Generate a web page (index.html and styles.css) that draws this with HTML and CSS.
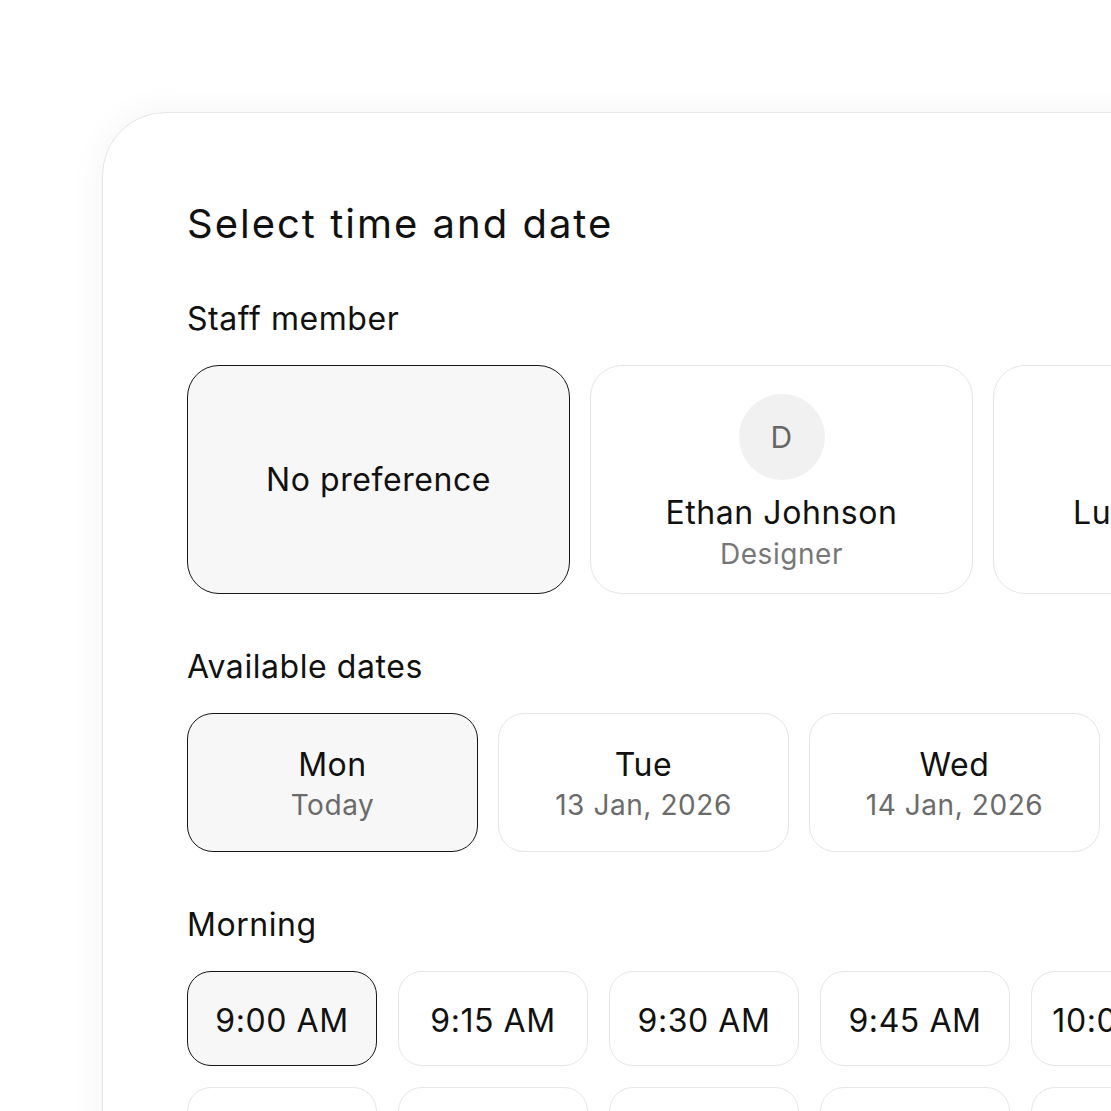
FILE: index.html
```html
<!DOCTYPE html>
<html lang="en">
<head>
  <meta charset="UTF-8" />
  <meta name="viewport" content="width=device-width, initial-scale=1.0" />
  <title>Select time and date</title>
  <link rel="stylesheet" href="styles.css">
</head>
<body>
  <div class="panel">
    <h1>Select time and date</h1>

    <h2>Staff member</h2>
    <div class="row staff">
      <button class="staff-card selected">
        <span class="name">No preference</span>
      </button>
      <button class="staff-card">
        <span class="avatar">D</span>
        <span class="name">Ethan Johnson</span>
        <span class="sub">Designer</span>
      </button>
      <button class="staff-card">
        <span class="avatar">L</span>
        <span class="name">Lucas Bennett</span>
        <span class="sub">Stylist</span>
      </button>
    </div>

    <h2>Available dates</h2>
    <div class="row dates">
      <button class="date-card selected">
        <span class="day">Mon</span>
        <span class="sub">Today</span>
      </button>
      <button class="date-card">
        <span class="day">Tue</span>
        <span class="sub">13 Jan, 2026</span>
      </button>
      <button class="date-card">
        <span class="day">Wed</span>
        <span class="sub">14 Jan, 2026</span>
      </button>
      <button class="date-card">
        <span class="day">Thu</span>
        <span class="sub">15 Jan, 2026</span>
      </button>
    </div>

    <h2>Morning</h2>
    <div class="times">
      <button class="slot selected">9:00 AM</button>
      <button class="slot">9:15 AM</button>
      <button class="slot">9:30 AM</button>
      <button class="slot">9:45 AM</button>
      <button class="slot">10:00 AM</button>
      <button class="slot">10:15 AM</button>
      <button class="slot">10:30 AM</button>
      <button class="slot">10:45 AM</button>
      <button class="slot">11:00 AM</button>
      <button class="slot">11:15 AM</button>
      <button class="slot">11:30 AM</button>
      <button class="slot">11:45 AM</button>
    </div>
  </div>
</body>
</html>
```

FILE: styles.css
```css
body {
  margin: 0;
  padding: 0;
  font-family: Inter, "Noto Sans", sans-serif;
  background: #fff;
  color: #111;
  overflow: hidden;
  height: 1111px;
  letter-spacing: 0.035em;
}
.panel {
  margin: 112px 0 0 102px;
  width: 1500px;
  padding: 87px 84px;
  background: #fff;
  border: 1px solid #e6e6e6;
  border-radius: 64px;
  box-shadow: 0 0 36px rgba(0,0,0,0.05);
}
h1 {
  margin: 0 0 49px;
  font-size: 40px;
  line-height: 48px;
  font-weight: 400;
  letter-spacing: 0.05em;
}
h2 {
  margin: 0 0 24px;
  font-size: 32px;
  line-height: 44px;
  font-weight: 400;
}
button {
  font-family: inherit;
  letter-spacing: inherit;
  color: #111;
  background: #fff;
  border: 1px solid #e6e6e6;
  cursor: pointer;
  padding: 0;
}
.selected {
  background: #f8f7f7;
  border: 1.6px solid #161616;
}
.row {
  display: flex;
  gap: 20px;
  margin-bottom: 51px;
}
.staff-card {
  flex: none;
  width: 383px;
  height: 229px;
  padding-top: 8px;
  border-radius: 32px;
  display: flex;
  flex-direction: column;
  align-items: center;
  justify-content: center;
}
.staff-card.selected {
  padding-top: 0;
}
.avatar {
  width: 86px;
  height: 86px;
  border-radius: 50%;
  background: #f2f1f1;
  color: #666;
  font-size: 30px;
  display: flex;
  align-items: center;
  justify-content: center;
  margin-bottom: 13px;
}
.name {
  font-size: 32px;
  line-height: 40px;
}
.sub {
  font-size: 28px;
  line-height: 40px;
  color: #777;
}
.staff-card .sub {
  margin-top: 1px;
}
.date-card {
  flex: none;
  width: 291px;
  height: 139px;
  padding-top: 4px;
  border-radius: 26px;
  display: flex;
  flex-direction: column;
  align-items: center;
  justify-content: center;
}
.date-card .sub {
  color: #6b6b6b;
}
.day {
  font-size: 32px;
  line-height: 40px;
}
.times {
  display: grid;
  grid-template-columns: repeat(6, 190px);
  gap: 21px;
}
.slot {
  height: 95px;
  border-radius: 24px;
  font-size: 32px;
  padding-top: 3px;
}
```
